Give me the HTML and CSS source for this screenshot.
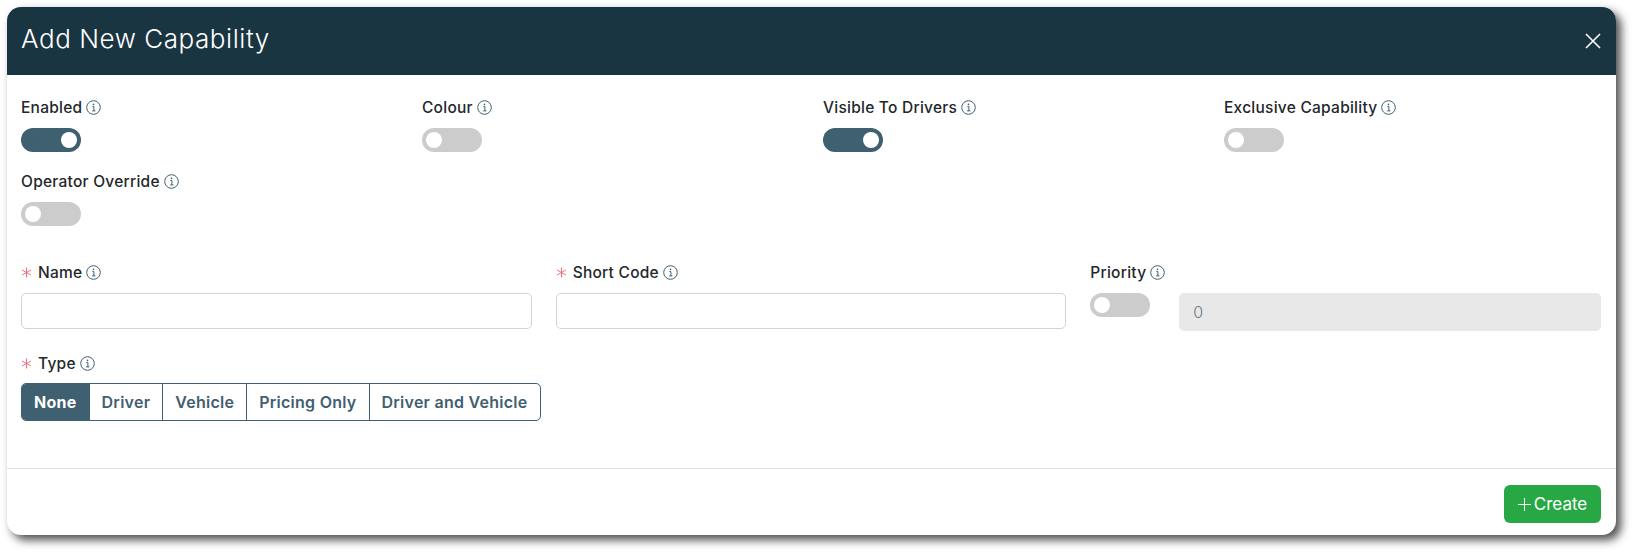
FILE: index.html
```html
<!DOCTYPE html>
<html lang="en">
<head>
<meta charset="utf-8">
<title>Add New Capability</title>
<link rel="stylesheet" href="styles.css">
</head>
<body>
<svg class="defs" width="0" height="0" aria-hidden="true">
  <symbol id="info" viewBox="0 0 15 15">
    <circle cx="7.5" cy="7.5" r="6.8" fill="none" stroke="#3f6070" stroke-width="1"/>
    <path d="M6.3 6.6H7.9V10.9M6.2 10.9H9.4" fill="none" stroke="#3f6070" stroke-width="1"/>
    <circle cx="7.5" cy="4.4" r=".8" fill="#3f6070"/>
  </symbol>
  <symbol id="req" viewBox="0 0 11 11">
    <path d="M5.5 .5V10.5M1 3L10 8M10 3L1 8" fill="none" stroke="#f0616d" stroke-width=".9"/>
  </symbol>
</svg>
<div class="modal">
  <header class="head">
    <h1 class="title">Add New Capability</h1>
    <svg class="close" width="16" height="16" viewBox="0 0 16 16"><path d="M1 1L15 15M15 1L1 15" stroke="#fff" stroke-width="1.6" fill="none"/></svg>
  </header>
  <main class="body">
    <div class="switches">
      <div class="field">
        <div class="label">Enabled<svg class="info"><use href="#info"/></svg></div>
        <span class="toggle on"></span>
      </div>
      <div class="field">
        <div class="label">Colour<svg class="info"><use href="#info"/></svg></div>
        <span class="toggle"></span>
      </div>
      <div class="field">
        <div class="label">Visible To Drivers<svg class="info"><use href="#info"/></svg></div>
        <span class="toggle on"></span>
      </div>
      <div class="field">
        <div class="label">Exclusive Capability<svg class="info"><use href="#info"/></svg></div>
        <span class="toggle"></span>
      </div>
      <div class="field">
        <div class="label">Operator Override<svg class="info"><use href="#info"/></svg></div>
        <span class="toggle"></span>
      </div>
    </div>
    <div class="inputs">
      <div class="field">
        <div class="label"><svg class="req"><use href="#req"/></svg>Name<svg class="info"><use href="#info"/></svg></div>
        <div class="input"></div>
      </div>
      <div class="field">
        <div class="label"><svg class="req"><use href="#req"/></svg>Short Code<svg class="info"><use href="#info"/></svg></div>
        <div class="input"></div>
      </div>
      <div class="field">
        <div class="label">Priority<svg class="info"><use href="#info"/></svg></div>
        <div class="priority">
          <span class="toggle"></span>
          <div class="input disabled">0</div>
        </div>
      </div>
    </div>
    <div class="field type">
      <div class="label"><svg class="req"><use href="#req"/></svg>Type<svg class="info"><use href="#info"/></svg></div>
      <div class="segments">
        <span class="seg active">None</span>
        <span class="seg">Driver</span>
        <span class="seg">Vehicle</span>
        <span class="seg">Pricing Only</span>
        <span class="seg">Driver and Vehicle</span>
      </div>
    </div>
  </main>
  <footer class="foot">
    <button class="create" type="button"><span class="plus"></span>Create</button>
  </footer>
</div>
</body>
</html>
```
FILE: styles.css
```css
* { box-sizing: border-box; }
html, body { margin: 0; height: 100%; background: #fff; }
body { padding: 7px 23px 23px 7px; font-family: Inter, "Open Sans", sans-serif; overflow: hidden; }
.defs { position: absolute; }
.modal {
  width: 1609px;
  height: 528px;
  background: #fff;
  border-radius: 14px;
  box-shadow: 5px 5px 10px rgba(0, 0, 0, .7);
  display: flex;
  flex-direction: column;
}
.head {
  height: 68px;
  flex: none;
  background: #1a3542;
  border-radius: 14px 14px 0 0;
  padding: 0 15px 6px 14px;
  display: flex;
  align-items: center;
  justify-content: space-between;
}
.title { margin: 0; font-size: 26px; font-weight: 300; color: #fff; letter-spacing: .55px; }
.close { display: block; margin-top: 5px; }
.body { flex: 1; padding: 22px 15px 0 14px; }
.switches { display: grid; grid-template-columns: repeat(4, 1fr); column-gap: 24px; row-gap: 19px; }
.inputs { display: grid; grid-template-columns: repeat(3, 1fr); column-gap: 24px; margin-top: 36px; }
.type { margin-top: 22px; }
.label {
  height: 20px;
  margin-bottom: 11px;
  display: flex;
  align-items: center;
  font-size: 15.5px;
  font-weight: 500;
  color: #23272b;
  letter-spacing: .25px;
  white-space: nowrap;
}
.type .label { margin-bottom: 10px; }
.info { width: 15px; height: 15px; margin-left: 4px; flex: none; }
.req { width: 11px; height: 11px; margin-right: 6px; flex: none; }
.toggle {
  display: block;
  position: relative;
  width: 60px;
  height: 24px;
  flex: none;
  border-radius: 12px;
  background: #ccc;
}
.toggle::after {
  content: "";
  position: absolute;
  top: 4px;
  left: 4px;
  width: 16px;
  height: 16px;
  border-radius: 50%;
  background: #fff;
}
.toggle.on { background: #3f6070; }
.toggle.on::after { left: 40px; }
.input { height: 36px; border: 1px solid #ced4da; border-radius: 5px; background: #fff; }
.priority { display: flex; gap: 29px; }
.input.disabled {
  flex: 1;
  height: 38px;
  border: 0;
  background: #e8e8e8;
  padding-left: 14px;
  display: flex;
  align-items: center;
  font-size: 16px;
  font-weight: 300;
  color: #6c7f8a;
}
.segments {
  display: inline-flex;
  height: 38px;
  border: 1px solid #3f6070;
  border-radius: 5px;
  overflow: hidden;
}
.seg {
  display: flex;
  align-items: center;
  padding: 0 12px;
  font-size: 16px;
  font-weight: 600;
  color: #3f6070;
  letter-spacing: .26px;
  border-left: 1px solid #3f6070;
}
.seg:first-child { border-left: 0; }
.seg.active { background: #3f6070; color: #fff; font-weight: 700; }
.foot {
  height: 67px;
  flex: none;
  border-top: 1px solid #e3e3e3;
  padding: 16px 15px 0 0;
  display: flex;
  justify-content: flex-end;
  align-items: flex-start;
}
.create {
  width: 97px;
  height: 38px;
  border: 0;
  border-radius: 6px;
  background: #28a745;
  color: #fff;
  font-family: inherit;
  font-size: 17px;
  font-weight: 400;
  display: flex;
  align-items: center;
  justify-content: center;
  gap: 3px;
  padding: 0;
}
.plus { position: relative; width: 13px; height: 13px; flex: none; }
.plus::before, .plus::after { content: ""; position: absolute; background: #fff; }
.plus::before { left: 0; right: 0; top: 6px; height: 1.5px; }
.plus::after { top: 0; bottom: 0; left: 6px; width: 1.5px; }
```
